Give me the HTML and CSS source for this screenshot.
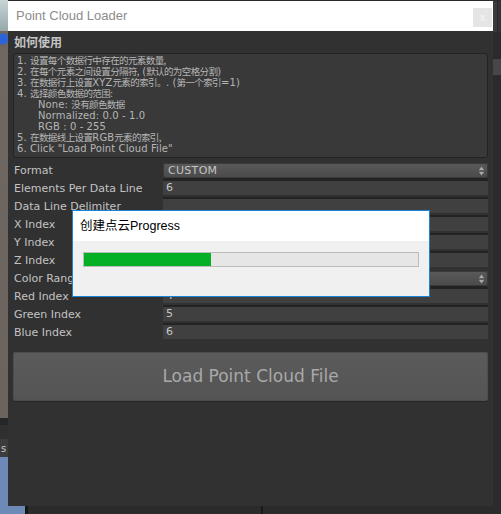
FILE: index.html
```html
<!DOCTYPE html>
<html>
<head>
<meta charset="utf-8">
<link rel="stylesheet" href="styles.css">
</head>
<body>
<div class="screen">
  <div class="edge-left">
    <div class="band sky"></div>
    <div class="band dot"></div>
    <div class="band earth"></div>
    <div class="band dark1"></div>
    <div class="band dark2"></div>
    <div class="band tab"><span>s</span></div>
    <div class="band blue"></div>
  </div>
  <div class="middle">
    <div class="topline"></div>
    <div class="window">
      <div class="titlebar">
        <span class="title">Point Cloud Loader</span>
        <span class="close">x</span>
      </div>
      <div class="content">
        <div class="heading">如何使用</div>
        <div class="help">
          <div>1. <span class="cn">设置每个数据行中存在的元素数量,</span></div>
          <div>2. <span class="cn">在每个元素之间设置分隔符,</span> (<span class="cn">默认的为空格分割</span>)</div>
          <div>3. <span class="cn">在数据行上设置</span>XYZ<span class="cn">元素的索引。</span>. (<span class="cn">第一个索引</span>=1)</div>
          <div>4. <span class="cn">选择颜色数据的范围:</span></div>
          <div class="ind">None: <span class="cn">没有颜色数据</span></div>
          <div class="ind">Normalized: 0.0 - 1.0</div>
          <div class="ind">RGB : 0 - 255</div>
          <div>5. <span class="cn">在数据线上设置</span>RGB<span class="cn">元素的索引,</span></div>
          <div>6. Click "Load Point Cloud File"</div>
        </div>
        <div class="form">
          <div class="row"><span class="label">Format</span><div class="select"><span>CUSTOM</span><svg class="arrows" width="5" height="10" viewBox="0 0 5 10"><polygon points="0,4 2.5,0.5 5,4" fill="#a9a9a9"/><rect x="0" y="4.6" width="5" height="0.8" fill="#777"/><polygon points="0,6 5,6 2.5,9.5" fill="#a9a9a9"/></svg></div></div>
          <div class="row"><span class="label">Elements Per Data Line</span><div class="field">6</div></div>
          <div class="row"><span class="label">Data Line Delimiter</span><div class="field"></div></div>
          <div class="row"><span class="label">X Index</span><div class="field"></div></div>
          <div class="row"><span class="label">Y Index</span><div class="field"></div></div>
          <div class="row"><span class="label">Z Index</span><div class="field"></div></div>
          <div class="row"><span class="label">Color Range</span><div class="select"><span></span><svg class="arrows" width="5" height="10" viewBox="0 0 5 10"><polygon points="0,4 2.5,0.5 5,4" fill="#a9a9a9"/><rect x="0" y="4.6" width="5" height="0.8" fill="#777"/><polygon points="0,6 5,6 2.5,9.5" fill="#a9a9a9"/></svg></div></div>
          <div class="row"><span class="label">Red Index</span><div class="field">4</div></div>
          <div class="row"><span class="label">Green Index</span><div class="field">5</div></div>
          <div class="row"><span class="label">Blue Index</span><div class="field">6</div></div>
        </div>
        <div class="load-btn">Load Point Cloud File</div>

        <div class="progress-dialog">
          <div class="pd-title">创建点云Progress</div>
          <div class="pd-body">
            <div class="pd-bar"><div class="pd-fill" style="width:38%"></div></div>
          </div>
        </div>
      </div>
    </div>
    <div class="under">
      <div class="u-blue"></div>
      <div class="u-line"></div>
      <div class="u-dark"><div class="u-seam"></div></div>
    </div>
  </div>
  <div class="edge-right">
    <div class="r-top"></div>
    <div class="r-gap"></div>
    <div class="r-thumb"></div>
    <div class="r-rest"></div>
  </div>
</div>
</body>
</html>
```
FILE: styles.css
```css
* { box-sizing: border-box; }
html, body { margin: 0; padding: 0; }
body { background: #2b2b2b; font-family: "DejaVu Sans", "Noto Sans CJK SC", sans-serif; }

.screen { display: flex; width: 501px; height: 514px; overflow: hidden; }

/* left desktop strip */
.edge-left { width: 8px; display: flex; flex-direction: column; flex: none; }
.band { flex: none; }
.sky { height: 31px; background: linear-gradient(#c7d5d7, #97a7aa); }
.dot { height: 16px; background: radial-gradient(circle at 3px 8px, #2b63d8 0, #2b63d8 5px, #6d6660 6px); }
.earth { height: 371px; background: linear-gradient(#6f6862, #6a635e); }
.dark1 { height: 7px; background: #262626; }
.dark2 { height: 14px; background: #2f2f2f; }
.tab { height: 18px; background: #3c3c3c; color: #c8c8c8; font-size: 10px; line-height: 20px; overflow: hidden; }
.tab span { display: block; padding-left: 1px; }
.blue { flex: 1; background: #6d89b6; }

/* middle column */
.middle { width: 485px; display: flex; flex-direction: column; flex: none; }
.topline { height: 1px; background: #2a2a2a; }
.window { height: 505px; display: flex; flex-direction: column; background: #313131; }

.titlebar { height: 30px; background: #ffffff; display: flex; justify-content: space-between; align-items: flex-start; padding-left: 8px; }
.title { font-family: "Liberation Sans", sans-serif; font-size: 13px; color: #8c8c8c; line-height: 30px; }
.close { width: 19px; height: 19px; margin-top: 7px; margin-right: 1px; background: #e5e5e5; color: #f6f6f6; font-family: "Liberation Sans", sans-serif; font-size: 11px; line-height: 18px; text-align: center; }

.content { flex: 1; position: relative; padding: 0 5px; }
.heading { height: 22px; line-height: 22px; padding-left: 1px; font-family: "Noto Sans CJK SC", sans-serif; font-weight: bold; font-size: 12px; color: #c4c4c4; }

.help { height: 105px; border: 1px solid #232323; border-radius: 3px; background: #393939; padding: 1px 3px; font-size: 10px; line-height: 11px; color: #b6b6b6; letter-spacing: 0.1px; white-space: nowrap; }
.help > div { height: 11px; }
.help .cn { font-family: "Noto Sans CJK SC", sans-serif; font-size: 9.5px; letter-spacing: -0.6px; }
.help .ind { padding-left: 21px; }

.form { margin-top: 3px; }
.row { display: grid; grid-template-columns: 150px 1fr; height: 18px; }
.label { padding-left: 1px; font-size: 11px; line-height: 19px; color: #c3c3c3; white-space: nowrap; }
.field { height: 16px; border-top: 2px solid #232323; background: #404040; font-size: 11px; line-height: 14px; color: #c6c6c6; padding-left: 3px; }
.select { height: 15px; margin-top: 2px; border-radius: 3px; background: linear-gradient(#5a5a5a, #4a4a4a); box-shadow: 0 1px 0 #222, inset 0 0 0 1px #3a3a3a; display: flex; justify-content: space-between; align-items: center; padding: 0 4px 0 5px; font-size: 11px; color: #c4c4c4; letter-spacing: 0.3px; }
.arrows { display: block; }

.load-btn { margin-top: 11px; height: 49px; border-radius: 3px; background: linear-gradient(#5b5b5b, #545454); box-shadow: 0 1px 0 #262626, inset 0 0 0 1px #4d4d4d; display: flex; align-items: center; justify-content: center; padding-bottom: 2px; font-size: 17px; color: #a9a9a9; }

/* progress window overlay */
.progress-dialog { position: absolute; left: 64px; top: 179px; width: 358px; height: 87px; border: 1px solid #1883d7; display: flex; flex-direction: column; background: #f0f0f0; }
.pd-title { height: 30px; background: #ffffff; padding-left: 7px; line-height: 30px; font-family: "Liberation Sans", "Noto Sans CJK SC", sans-serif; font-size: 12.5px; color: #000; }
.pd-body { flex: 1; padding: 11px 10px 0; }
.pd-bar { height: 15px; border: 1px solid #bcbcbc; background: #e6e6e6; }
.pd-fill { height: 100%; background: #06b025; }

/* below window */
.under { height: 8px; display: flex; }
.u-blue { width: 17px; background: #6d89b6; }
.u-line { width: 3px; background: #151515; }
.u-dark { flex: 1; background: #2b2b2b; padding-left: 233px; }
.u-seam { width: 2px; height: 100%; background: #1a1a1a; }

/* right strip */
.edge-right { width: 8px; flex: none; display: flex; flex-direction: column; background: #2b2b2b; }
.r-top { height: 31px; margin-top: 1px; background: linear-gradient(90deg, #3a3a3a 0, #3a3a3a 4px, #262626 4px, #262626 5px, #333 5px); }
.r-gap { height: 27px; }
.r-thumb { height: 16px; background: #474747; }
.r-rest { flex: 1; }
```
